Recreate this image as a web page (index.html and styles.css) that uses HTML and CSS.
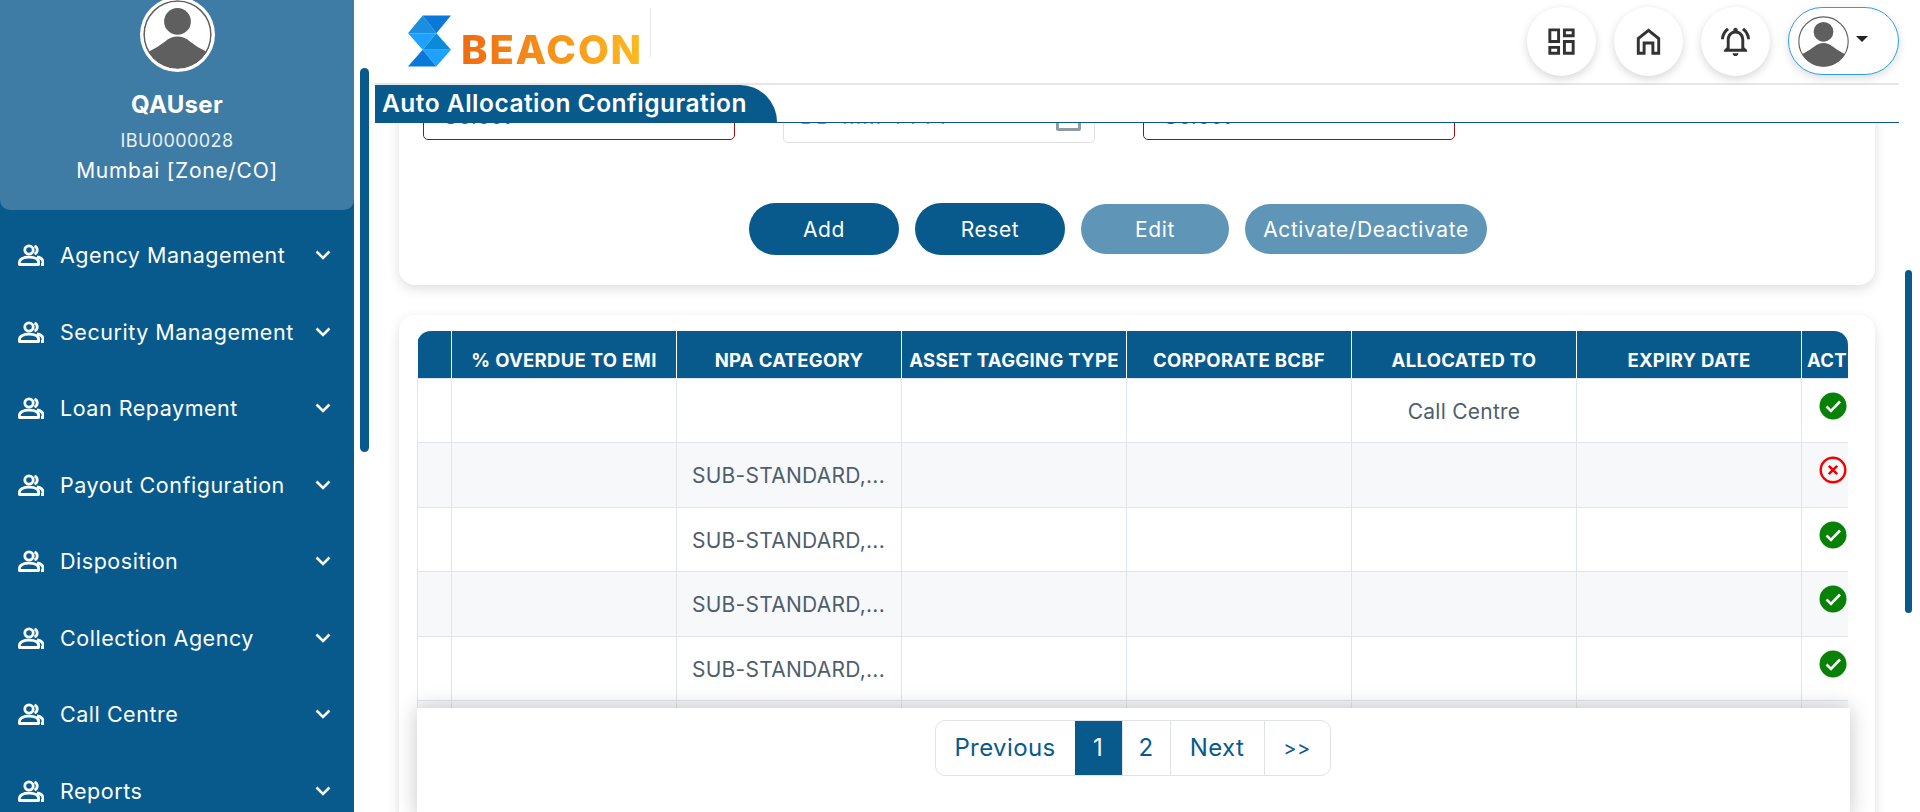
FILE: index.html
```html
<!DOCTYPE html>
<html lang="en">
<head>
  <meta charset="UTF-8" />
  <title>Auto Allocation Configuration</title>
  <link rel="stylesheet" href="styles.css">
</head>
<body>

<svg class="icon-defs" width="0" height="0">
  <symbol id="i-people" viewBox="0 0 26 22">
    <circle cx="11" cy="6" r="4.2" fill="none" stroke="currentColor" stroke-width="2.8"/>
    <path d="M16.5 2a4.3 4.3 0 0 1 0 8" fill="none" stroke="currentColor" stroke-width="2.8"/>
    <path d="M1.4 20.5v-2c0-3.6 4.4-5.3 9.600-5.300s9.600 1.700 9.600 5.300v2z" fill="none" stroke="currentColor" stroke-width="2.8" stroke-linejoin="round"/>
    <path d="M19 13c3.500.6 6 2.200 6 5v2.500h-2" fill="none" stroke="currentColor" stroke-width="2.8"/>
  </symbol>
  <symbol id="i-chevron" viewBox="0 0 16 10">
    <path d="M1.5 1.500 8 8l6.500-6.500" fill="none" stroke="currentColor" stroke-width="2.6"/>
  </symbol>
  <symbol id="i-ok" viewBox="0 0 28 28">
    <circle cx="14" cy="14" r="13.5" fill="#078207"/>
    <path d="M7.500 14.500l4.500 4.500 9-9.500" fill="none" stroke="#fff" stroke-width="2.6"/>
  </symbol>
  <symbol id="i-off" viewBox="0 0 28 28">
    <circle cx="14" cy="14" r="12.3" fill="none" stroke="#f40000" stroke-width="2.4"/>
    <path d="M9.800 9.800l8.400 8.400M18.200 9.800l-8.400 8.400" fill="none" stroke="#f40000" stroke-width="2.6"/>
  </symbol>
  <symbol id="i-avatar" viewBox="0 0 50 50">
    <circle cx="25" cy="25" r="24.2" fill="#fff" stroke="#5f5f5f" stroke-width="1.1"/>
    <circle cx="25" cy="15.5" r="9.7" fill="#5f5f5f"/>
    <path d="M4 37.500Q11 34 16 30Q20 26.500 25 26.500Q30 26.500 34 30Q39 34 46 37.500A24.400 24.400 0 0 1 4 37.500z" fill="#5f5f5f"/>
  </symbol>
</svg>

<div class="app">
  <aside class="sidebar">
    <div class="profile">
      <svg class="profile-pic"><use href="#i-avatar"/></svg>
      <div class="profile-name">QAUser</div>
      <div class="profile-id">IBU0000028</div>
      <div class="profile-loc">Mumbai [Zone/CO]</div>
    </div>
    <nav class="menu">
      <a class="menu-item"><svg class="menu-icon"><use href="#i-people"/></svg><span>Agency Management</span><svg class="menu-arrow"><use href="#i-chevron"/></svg></a>
      <a class="menu-item"><svg class="menu-icon"><use href="#i-people"/></svg><span>Security Management</span><svg class="menu-arrow"><use href="#i-chevron"/></svg></a>
      <a class="menu-item"><svg class="menu-icon"><use href="#i-people"/></svg><span>Loan Repayment</span><svg class="menu-arrow"><use href="#i-chevron"/></svg></a>
      <a class="menu-item"><svg class="menu-icon"><use href="#i-people"/></svg><span>Payout Configuration</span><svg class="menu-arrow"><use href="#i-chevron"/></svg></a>
      <a class="menu-item"><svg class="menu-icon"><use href="#i-people"/></svg><span>Disposition</span><svg class="menu-arrow"><use href="#i-chevron"/></svg></a>
      <a class="menu-item"><svg class="menu-icon"><use href="#i-people"/></svg><span>Collection Agency</span><svg class="menu-arrow"><use href="#i-chevron"/></svg></a>
      <a class="menu-item"><svg class="menu-icon"><use href="#i-people"/></svg><span>Call Centre</span><svg class="menu-arrow"><use href="#i-chevron"/></svg></a>
      <a class="menu-item"><svg class="menu-icon"><use href="#i-people"/></svg><span>Reports</span><svg class="menu-arrow"><use href="#i-chevron"/></svg></a>
    </nav>
  </aside>

  <div class="side-scroll"><div class="side-thumb"></div></div>

  <main class="main">
    <header class="topbar">
      <div class="logo">
        <svg class="logo-mark" viewBox="0 0 44 52">
          <polygon points="15,0 0,18 29,18" fill="#1a8fe0"/>
          <polygon points="15,0 44,0 29,18" fill="#0a78d8"/>
          <polygon points="0,18 29,18 15,35" fill="#1fa2ff"/>
          <polygon points="29,18 44,35 15,35" fill="#0b8ad8"/>
          <polygon points="15,35 44,35 29,52" fill="#1fa2ff"/>
          <polygon points="15,35 29,52 0,52" fill="#0a78d8"/>
        </svg>
        <span class="logo-text">BEACON</span>
      </div>
      <div class="top-actions">
        <button class="round-btn"><svg viewBox="0 0 24 24"><path d="M19 5v2h-4V5h4M9 5v6H5V5h4m10 8v6h-4v-6h4M9 17v2H5v-2h4M21 3h-8v6h8V3zM11 3H3v10h8V3zm10 8h-8v10h8V11zm-10 4H3v6h8v-6z"/></svg></button>
        <button class="round-btn"><svg viewBox="0 0 24 24"><path d="M12 3 4 9.500V21h6v-7h4v7h6V9.500zm6 16h-2v-7H8v7H6v-8.500l6-4.900 6 4.900z"/></svg></button>
        <button class="round-btn"><svg viewBox="0 0 24 24"><path d="M7.580 4.080 6.150 2.650C3.750 4.480 2.170 7.300 2.030 10.500h2c.15-2.650 1.510-4.970 3.550-6.420zm12.390 6.420h2c-.15-3.200-1.730-6.020-4.120-7.850l-1.420 1.430c2.020 1.450 3.390 3.770 3.540 6.420zM18 11c0-3.070-1.640-5.640-4.500-6.320V4c0-.83-.67-1.500-1.500-1.500s-1.500.67-1.500 1.500v.68C7.630 5.360 6 7.920 6 11v5l-2 2v1h16v-1l-2-2v-5zm-2 6H8v-6c0-2.480 1.510-4.500 4-4.500s4 2.020 4 4.500v6zm-4 5c1.100 0 2-.9 2-2h-4c0 1.100.89 2 2 2z"/></svg></button>
        <button class="user-btn"><svg class="user-pic"><use href="#i-avatar"/></svg><span class="caret"></span></button>
      </div>
    </header>

    <div class="page-title"><h1>Auto Allocation Configuration</h1></div>

    <div class="scroll-area">
      <section class="card form-card">
        <div class="form-row">
          <div class="field field-error">Select</div>
          <div class="field field-date">DD-MM-YYYY<span class="cal"></span></div>
          <div class="field field-error">Select</div>
        </div>
        <div class="btn-row">
          <button class="btn">Add</button>
          <button class="btn">Reset</button>
          <button class="btn btn-off">Edit</button>
          <button class="btn btn-off btn-wide">Activate/Deactivate</button>
        </div>
      </section>

      <section class="card table-card">
        <div class="table-wrap">
          <table class="grid">
            <thead>
              <tr>
                <th class="col-first"></th>
                <th>% OVERDUE TO EMI</th>
                <th>NPA CATEGORY</th>
                <th>ASSET TAGGING TYPE</th>
                <th>CORPORATE BCBF</th>
                <th>ALLOCATED TO</th>
                <th>EXPIRY DATE</th>
                <th class="col-action">ACTION</th>
              </tr>
            </thead>
            <tbody>
              <tr><td></td><td></td><td></td><td></td><td></td><td class="center">Call Centre</td><td></td><td class="action"><svg><use href="#i-ok"/></svg></td></tr>
              <tr><td></td><td></td><td>SUB-STANDARD,...</td><td></td><td></td><td></td><td></td><td class="action"><svg><use href="#i-off"/></svg></td></tr>
              <tr><td></td><td></td><td>SUB-STANDARD,...</td><td></td><td></td><td></td><td></td><td class="action"><svg><use href="#i-ok"/></svg></td></tr>
              <tr><td></td><td></td><td>SUB-STANDARD,...</td><td></td><td></td><td></td><td></td><td class="action"><svg><use href="#i-ok"/></svg></td></tr>
              <tr><td></td><td></td><td>SUB-STANDARD,...</td><td></td><td></td><td></td><td></td><td class="action"><svg><use href="#i-ok"/></svg></td></tr>
              <tr><td></td><td></td><td></td><td></td><td></td><td></td><td></td><td class="action"></td></tr>
            </tbody>
          </table>
        </div>
        <div class="pager-bar">
          <div class="pager">
            <a class="pg pg-prev">Previous</a>
            <a class="pg pg-num pg-on">1</a>
            <a class="pg pg-num">2</a>
            <a class="pg pg-next">Next</a>
            <a class="pg pg-last">&gt;&gt;</a>
          </div>
        </div>
      </section>
    </div>
  </main>

  <div class="page-rail"><div class="page-thumb"></div></div>
</div>

</body>
</html>
```

FILE: styles.css
```css
html, body {
  margin: 0;
  height: 100%;
  overflow: hidden;
}
body {
  font-family: Inter, "Open Sans", Arial, sans-serif;
  background: #fff;
  color: #4d5f6b;
}
.icon-defs {
  position: absolute;
}
.app {
  display: flex;
  height: 812px;
}

/* sidebar */
.sidebar {
  width: 354px;
  flex: none;
  background: #085a8c;
  color: #fff;
  overflow: hidden;
}
.profile {
  height: 213px;
  margin-top: -3px;
  background: #3f7ca5;
  border-radius: 0 0 10px 10px;
  text-align: center;
}
.profile-pic {
  display: block;
  width: 75px;
  height: 75px;
  margin: 0 auto;
  padding: 3px;
  box-sizing: border-box;
  border-radius: 50%;
  background: #fff;
}
.profile-name {
  font-size: 24px;
  font-weight: 700;
  letter-spacing: .3px;
  line-height: 30px;
  margin-top: 18px;
}
.profile-id {
  font-size: 18px;
  letter-spacing: .4px;
  line-height: 24px;
  margin-top: 9px;
  color: #e8f0f5;
}
.profile-loc {
  font-size: 21px;
  letter-spacing: .7px;
  line-height: 28px;
  margin-top: 4px;
}
.menu {
  padding-top: 7px;
}
.menu-item {
  display: flex;
  align-items: center;
  height: 76.5px;
  padding: 0 23px 0 18px;
  font-size: 21.5px;
  letter-spacing: .53px;
}
.menu-item span {
  flex: 1;
  margin-left: 16px;
  white-space: nowrap;
}
.menu-icon {
  width: 26px;
  height: 22px;
}
.menu-arrow {
  width: 16px;
  height: 10px;
}

.side-scroll {
  width: 21px;
  flex: none;
  padding: 68px 0 0 6px;
  box-sizing: border-box;
}
.side-thumb {
  width: 9px;
  height: 384px;
  border-radius: 5px;
  background: #085a8c;
}

/* main */
.main {
  flex: 1;
  min-width: 0;
  display: flex;
  flex-direction: column;
}
.page-rail {
  width: 21px;
  flex: none;
  padding: 270px 0 0 6px;
  box-sizing: border-box;
}
.page-thumb {
  width: 7px;
  height: 343px;
  border-radius: 4px;
  background: #085a8c;
}
.topbar {
  height: 85px;
  flex: none;
  box-sizing: border-box;
  display: flex;
  justify-content: space-between;
  border-bottom: 2px solid #e6e6e6;
}
.logo {
  display: flex;
  align-items: flex-end;
  width: 243px;
  height: 49px;
  margin: 8px 0 0 33px;
  border-right: 1px solid #e8e8e8;
  box-sizing: border-box;
}
.logo-mark {
  width: 43px;
  height: 52px;
  margin-bottom: -10px;
  flex: none;
}
.logo-text {
  font-size: 40px;
  font-weight: 800;
  letter-spacing: 1.8px;
  line-height: 40px;
  margin: 0 0 -13px 10px;
  background: linear-gradient(90deg, #ee6b12, #fdbb21);
  -webkit-background-clip: text;
  background-clip: text;
  color: transparent;
}
.top-actions {
  display: flex;
  align-items: flex-start;
  padding-top: 7px;
}
.round-btn {
  width: 69px;
  height: 69px;
  margin-right: 18px;
  padding: 0;
  border: none;
  border-radius: 50%;
  background: #fff;
  box-shadow: 0 3px 8px rgba(0, 0, 0, .16);
  display: flex;
  align-items: center;
  justify-content: center;
}
.round-btn svg {
  width: 35px;
  height: 35px;
  fill: #333;
}
.user-btn {
  width: 111px;
  height: 68px;
  padding: 0 0 0 9px;
  border: 1px solid #2e9ef0;
  border-radius: 34px;
  background: #fff;
  box-shadow: 0 3px 8px rgba(0, 0, 0, .14);
  display: flex;
  align-items: center;
  box-sizing: border-box;
}
.user-pic {
  width: 51px;
  height: 51px;
}
.caret {
  width: 0;
  height: 0;
  margin: 0 0 5px 7px;
  border-top: 6px solid #222;
  border-left: 6px solid transparent;
  border-right: 6px solid transparent;
}

.page-title {
  flex: none;
  height: 38px;
  box-sizing: border-box;
  border-bottom: 1px solid #085a8c;
  position: relative;
  z-index: 3;
}
.page-title h1 {
  width: 402px;
  height: 37px;
  margin: 0;
  padding-left: 7px;
  box-sizing: border-box;
  background: #085a8c;
  border-radius: 0 38px 0 0;
  color: #fff;
  font-size: 24.5px;
  font-weight: 600;
  letter-spacing: .5px;
  line-height: 36px;
  white-space: nowrap;
}

.scroll-area {
  flex: 1;
  min-height: 0;
  overflow: hidden;
  padding: 0 24px;
}
.card {
  background: #fff;
  border-radius: 16px;
  box-shadow: 0 4px 12px rgba(0, 0, 0, .13);
}
.form-card {
  height: 310px;
  margin-top: -148px;
  padding: 113px 0 0 24px;
  box-sizing: border-box;
}
.form-row {
  display: flex;
  align-items: flex-start;
  gap: 48px;
  height: 115px;
}
.field {
  width: 312px;
  height: 52px;
  box-sizing: border-box;
  border-radius: 5px;
  font-size: 21px;
  letter-spacing: .8px;
  line-height: 56px;
  padding-left: 20px;
  color: #4d5f6b;
  overflow: hidden;
}
.field-error {
  border: 1px solid #8e1414;
}
.field-date {
  height: 55px;
  border: 1px solid #dde1e4;
  position: relative;
  color: #888;
  padding-left: 16px;
}
.cal {
  position: absolute;
  right: 13px;
  bottom: 11px;
  width: 25px;
  height: 22px;
  border: 3px solid #8f9ca3;
  border-radius: 2px;
  box-sizing: border-box;
}
.btn-row {
  display: flex;
  justify-content: center;
  align-items: center;
  gap: 16px;
  height: 52px;
  margin-left: -24px;
  padding-right: 38px;
}
.btn {
  width: 150px;
  height: 52px;
  border: none;
  border-radius: 26px;
  background: #085a8c;
  color: #fff;
  font-family: inherit;
  font-size: 21px;
  letter-spacing: .6px;
  white-space: nowrap;
}
.btn-off {
  width: 148px;
  height: 50px;
  background: #5f95b6;
}
.btn-wide {
  width: 242px;
}

.table-card {
  margin-top: 30px;
  padding: 16px 27px 0 18px;
  position: relative;
  height: 560px;
}
.table-wrap {
  overflow: hidden;
  border-radius: 14px 14px 0 0;
  height: 500px;
}
.grid {
  border-collapse: collapse;
  table-layout: fixed;
  width: 1431px;
}
.grid th {
  width: 225px;
  height: 47px;
  box-sizing: border-box;
  padding: 12px 0 0;
  background: #085a8c;
  color: #fff;
  font-size: 18.5px;
  font-weight: 700;
  letter-spacing: .3px;
  white-space: nowrap;
  border-left: 1px solid #fff;
  overflow: hidden;
}
.grid th:first-child {
  border-left: none;
}
.grid .col-first {
  width: 34px;
}
.grid .col-action {
  width: 47px;
  text-align: left;
  padding-left: 5px;
}
.grid td {
  height: 64.5px;
  box-sizing: border-box;
  padding: 2px 15px 0;
  border: 1px solid #dfe5e9;
  font-size: 21px;
  letter-spacing: .25px;
  white-space: nowrap;
  overflow: hidden;
}
.grid tbody tr:nth-child(even) td {
  background: #f6f8fa;
}
.grid .center {
  text-align: center;
}
.grid .action {
  padding: 0 0 0 17px;
  vertical-align: top;
}
.action svg {
  display: block;
  width: 28px;
  height: 28px;
  margin-top: 13px;
}

/* stays over the last table row */
.pager-bar {
  position: absolute;
  left: 18px;
  top: 393px;
  width: 1433px;
  height: 110px;
  background: #fff;
  box-shadow: 0 0 20px rgba(0, 0, 0, .22);
  display: flex;
  justify-content: center;
  padding: 12px 2px 0 0;
  box-sizing: border-box;
}
.pager {
  display: flex;
  height: 56px;
  border: 1px solid #dfe3e8;
  border-radius: 10px;
  box-sizing: border-box;
  color: #085a8c;
  font-size: 24px;
  letter-spacing: .4px;
  line-height: 54px;
  overflow: hidden;
}
.pg {
  text-align: center;
  border-left: 1px solid #dfe3e8;
  box-sizing: border-box;
}
.pg-prev {
  width: 139px;
  border-left: none;
}
.pg-num {
  width: 48px;
}
.pg-on {
  width: 47px;
  background: #085a8c;
  color: #fff;
  border-left: none;
}
.pg-next {
  width: 94px;
}
.pg-last {
  width: 66px;
  font-size: 20px;
}
```
